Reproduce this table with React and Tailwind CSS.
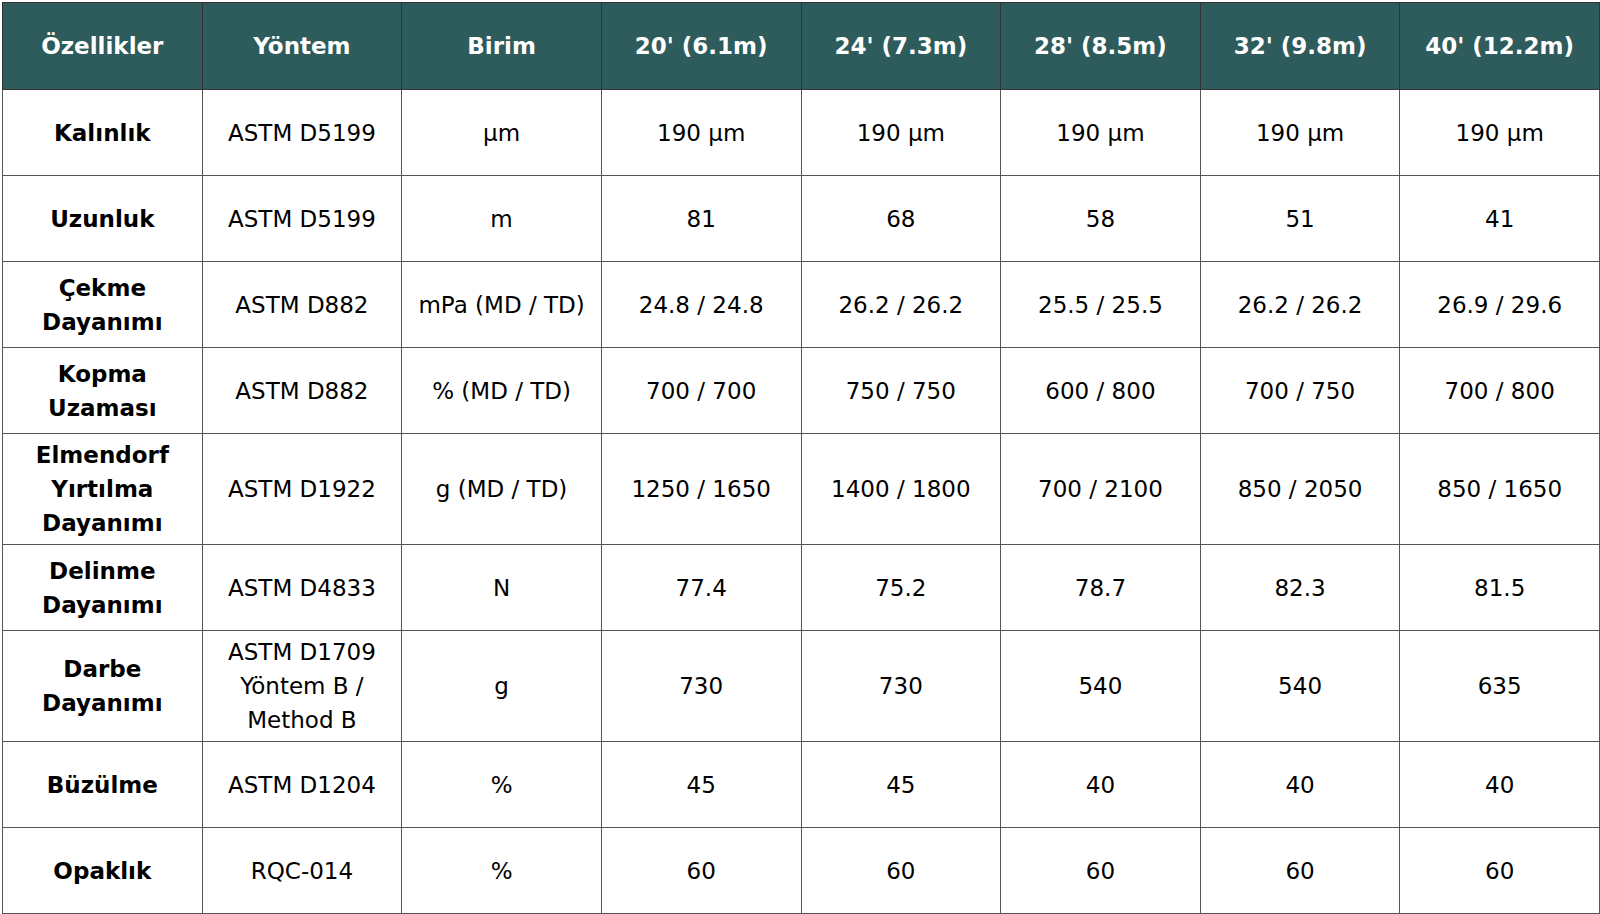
import React from 'react';

const columns = ['Özellikler', 'Yöntem', 'Birim', "20' (6.1m)", "24' (7.3m)", "28' (8.5m)", "32' (9.8m)", "40' (12.2m)"];

const rows = [
    { label: ['Kalınlık'], method: ['ASTM D5199'], unit: 'µm', values: ['190 µm', '190 µm', '190 µm', '190 µm', '190 µm'] },
    { label: ['Uzunluk'], method: ['ASTM D5199'], unit: 'm', values: ['81', '68', '58', '51', '41'] },
    { label: ['Çekme', 'Dayanımı'], method: ['ASTM D882'], unit: 'mPa (MD / TD)', values: ['24.8 / 24.8', '26.2 / 26.2', '25.5 / 25.5', '26.2 / 26.2', '26.9 / 29.6'] },
    { label: ['Kopma', 'Uzaması'], method: ['ASTM D882'], unit: '% (MD / TD)', values: ['700 / 700', '750 / 750', '600 / 800', '700 / 750', '700 / 800'] },
    { label: ['Elmendorf', 'Yırtılma', 'Dayanımı'], method: ['ASTM D1922'], unit: 'g (MD / TD)', values: ['1250 / 1650', '1400 / 1800', '700 / 2100', '850 / 2050', '850 / 1650'] },
    { label: ['Delinme', 'Dayanımı'], method: ['ASTM D4833'], unit: 'N', values: ['77.4', '75.2', '78.7', '82.3', '81.5'] },
    { label: ['Darbe', 'Dayanımı'], method: ['ASTM D1709', 'Yöntem B /', 'Method B'], unit: 'g', values: ['730', '730', '540', '540', '635'] },
    { label: ['Büzülme'], method: ['ASTM D1204'], unit: '%', values: ['45', '45', '40', '40', '40'] },
    { label: ['Opaklık'], method: ['RQC-014'], unit: '%', values: ['60', '60', '60', '60', '60'] },
];

const Lines = ({ lines }) => lines.map((l, i) => <div key={i}>{l}</div>);

const App = () => {
    return (
        <div className="w-[1600px] h-[914px] bg-white pt-[2px] pl-[2px] font-['DejaVu_Sans',Verdana,sans-serif] text-[23px] text-black">
            <table className="w-[1598px] border-collapse table-fixed">
                <thead>
                    <tr className="h-[87px] bg-[#2e5b5b]">
                        {columns.map(c => (
                            <th key={c} className="border border-[#333] text-white font-bold text-center align-middle">
                                {c}
                            </th>
                        ))}
                    </tr>
                </thead>
                <tbody>
                    {rows.map((r, i) => (
                        <tr key={i} className="h-[86px] leading-[34px]">
                            <td className="border border-[#555] text-center align-middle font-bold py-[4px]">
                                <Lines lines={r.label} />
                            </td>
                            <td className="border border-[#555] text-center align-middle py-[4px]">
                                <Lines lines={r.method} />
                            </td>
                            <td className="border border-[#555] text-center align-middle">{r.unit}</td>
                            {r.values.map((v, j) => (
                                <td key={j} className="border border-[#555] text-center align-middle">{v}</td>
                            ))}
                        </tr>
                    ))}
                </tbody>
            </table>
        </div>
    );
};

export default App;
